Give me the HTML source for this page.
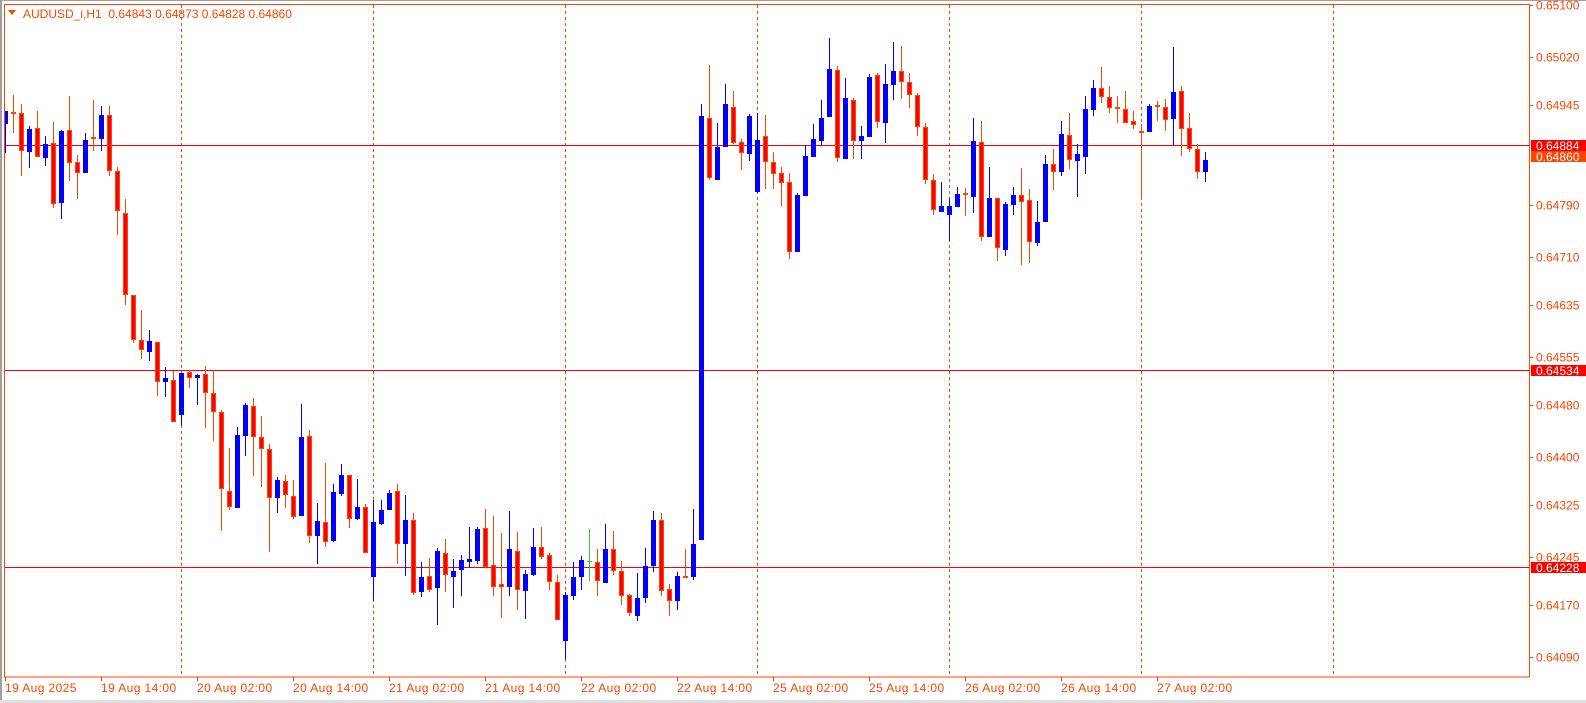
<!DOCTYPE html>
<html><head><meta charset="utf-8"><style>
html,body{margin:0;padding:0;background:#fff;width:1586px;height:703px;overflow:hidden}
svg{display:block}
text{font-family:"Liberation Sans",sans-serif;font-size:12px;fill:#ff4500}
</style></head><body>
<svg id="s" width="1586" height="703" xmlns="http://www.w3.org/2000/svg">
<rect x="0" y="0" width="1586" height="703" fill="#fff"/>
<rect x="0" y="0" width="1586" height="1" fill="#a0a0a0"/>
<rect x="0" y="0" width="2" height="703" fill="#a0a0a0"/>
<rect x="0" y="700" width="1586" height="3" fill="#e0e0e0"/>
<g id="grid"></g>
<rect x="4" y="145" width="1525" height="1" fill="#ff0000"/>
<rect x="4" y="370" width="1525" height="1" fill="#ff0000"/>
<rect x="4" y="567" width="1525" height="1" fill="#ff0000"/>
<g id="c"></g>
<rect x="4.5" y="4.5" width="1525" height="672.5" fill="none" stroke="#ff4500" stroke-width="1"/>
<g id="ax"></g>
<polygon points="8,10 16,10 12,15" fill="#ff4500"/>
<text x="23" y="18">AUDUSD_i,H1&#160;&#160;0.64843 0.64873 0.64828 0.64860</text>
<rect x="1531" y="140" width="55" height="11" fill="#ff0000"/>
<rect x="1531" y="151" width="55" height="11" fill="#ff4500"/>
<rect x="1531" y="365" width="55" height="11" fill="#ff0000"/>
<rect x="1531" y="562" width="55" height="11" fill="#ff0000"/>
<text x="1536" y="150" style="fill:#fff">0.64884</text>
<text x="1536" y="161" style="fill:#fff">0.64860</text>
<text x="1536" y="375" style="fill:#fff">0.64534</text>
<text x="1536" y="572" style="fill:#fff">0.64228</text>
</svg>
<script>
var d="B,111,124,111,153|R,112,114,95,133|R,113,151,104,176|B,129,152,126,168|R,128,157,111,157|B,144,158,136,166|R,143,204,122,208|B,131,203,130,219|R,130,163,96,181|R,162,173,155,199|B,140,173,133,173|R,137,139,100,151|B,115,139,106,151|R,115,171,106,176|R,171,211,167,235|R,213,295,199,305|R,295,340,295,343|R,340,350,310,359|B,341,352,330,361|R,342,382,342,396|B,378,382,367,397|R,380,422,371,422|B,373,415,373,426|R,372,378,370,388|B,375,378,374,405|R,374,393,366,428|R,393,412,370,441|R,412,489,410,531|R,491,507,448,510|B,435,508,427,508|B,405,436,403,456|R,406,437,398,476|R,437,449,416,487|R,449,498,444,552|B,480,498,477,513|R,481,495,475,508|R,496,517,480,519|B,437,516,404,516|R,436,536,430,543|B,521,536,503,564|R,522,542,463,547|B,492,541,484,542|B,475,494,464,496|R,475,519,475,528|B,507,519,479,520|R,507,553,504,553|B,522,577,500,601|B,510,524,500,525|B,493,510,490,510|R,491,544,484,564|B,520,544,495,576|R,520,593,513,595|B,577,592,562,597|R,576,590,558,592|B,551,588,548,625|R,553,575,539,592|B,571,577,559,608|B,560,570,555,596|B,559,562,527,568|B,529,561,527,564|R,528,567,509,568|R,565,587,516,596|R,584,587,533,618|B,549,587,511,596|R,551,590,532,610|B,574,591,570,619|B,547,575,528,576|R,547,557,527,559|R,555,582,553,590|R,582,620,575,620|B,595,641,592,659|B,577,596,562,600|B,560,577,556,590|G,561,562,529,581|R,562,581,549,596|B,549,583,524,583|R,549,571,531,575|R,571,596,561,605|R,595,613,594,616|B,598,616,573,621|B,566,598,548,603|B,520,566,511,572|R,520,591,513,596|R,589,601,584,616|B,576,601,572,610|R,576,578,549,578|B,544,577,509,580|B,116,540,104,540|R,118,178,65,180|B,147,180,123,180|B,104,147,84,147|R,107,143,91,144|R,142,153,139,170|B,116,154,114,161|B,140,192,113,193|R,136,162,115,189|R,162,174,152,189|R,173,183,167,206|R,182,252,173,259|B,195,252,193,252|B,156,196,145,196|B,139,157,124,157|B,118,141,100,145|B,69,117,38,117|R,70,158,66,162|B,98,159,78,159|R,100,141,98,159|B,136,141,126,159|B,77,137,74,137|R,75,122,73,128|B,84,123,64,143|B,71,85,42,100|R,71,82,46,99|R,82,95,73,108|R,95,127,93,136|R,127,180,123,184|R,180,210,174,215|B,206,212,182,212|B,206,215,198,241|B,194,207,187,207|R,193,195,188,216|B,141,197,118,213|R,142,237,121,241|B,198,237,167,237|R,198,248,198,261|B,204,250,202,256|B,195,205,187,215|R,195,202,168,265|R,200,242,189,263|B,222,243,201,246|B,164,222,155,222|R,164,172,149,190|B,134,172,121,176|R,135,160,113,169|B,154,161,144,197|B,109,157,96,174|B,88,110,80,116|R,88,97,67,103|R,97,108,86,113|R,107,109,96,123|R,109,123,91,123|R,121,125,111,129|R,131,132,124,199|B,106,132,104,132|R,105,107,101,121|R,107,120,99,131|B,92,119,47,145|R,91,129,86,156|R,128,149,113,152|R,149,172,144,179|B,160,172,152,182";
var out="";
d.split("|").forEach(function(s,i){
 var a=s.split(","),c=a[0],t=+a[1],b=+a[2],h=+a[3],l=+a[4];
 var wx=5+8*i,bx=3+8*i;
 if(i==0){bx=5;}
 var bw=(i==0)?3:5;
 if(c=="B"){
  out+='<rect x="'+wx+'" y="'+h+'" width="1" height="'+Math.max(1,l-h)+'" fill="#0000ff"/>';
  out+='<rect x="'+bx+'" y="'+t+'" width="'+bw+'" height="'+Math.max(2,b-t)+'" fill="#0000ff"/>';
 }else if(c=="R"){
  out+='<rect x="'+wx+'" y="'+h+'" width="1" height="'+Math.max(1,l-h)+'" fill="#ff4500"/>';
  var hh=Math.max(2,b-t);
  out+='<rect x="'+bx+'" y="'+t+'" width="'+bw+'" height="'+hh+'" fill="#ff4500"/>';
  if(hh>2)out+='<rect x="'+(bx+1)+'" y="'+(t+1)+'" width="'+(bw-2)+'" height="'+(hh-2)+'" fill="#ff0000"/>';
 }else{
  out+='<rect x="'+wx+'" y="'+h+'" width="1" height="'+(l-h)+'" fill="#33cc33"/>';
  out+='<rect x="'+bx+'" y="'+t+'" width="5" height="1" fill="#33cc33"/>';
 }
});
document.getElementById("c").innerHTML=out;
var g="";
[181,373,565,757,949,1141,1333].forEach(function(x){
 g+='<line x1="'+(x+0.5)+'" y1="5" x2="'+(x+0.5)+'" y2="677" stroke="#ff4500" stroke-width="1" stroke-dasharray="3,3"/>';
});
document.getElementById("grid").innerHTML=g;
var ax="";
var pl=[["0.65100",5.3],["0.65020",57],["0.64945",105],["0.64790",205],["0.64710",257],["0.64635",305],["0.64555",357],["0.64480",405],["0.64400",457],["0.64325",505],["0.64245",557],["0.64170",605],["0.64090",657]];
pl.forEach(function(p){
 var y=Math.round(p[1]);
 ax+='<rect x="1530" y="'+y+'" width="3" height="1" fill="#ff4500"/>';
 ax+='<text x="1536" y="'+(y+4.5)+'">'+p[0]+'</text>';
});
var tl=["19 Aug 2025","19 Aug 14:00","20 Aug 02:00","20 Aug 14:00","21 Aug 02:00","21 Aug 14:00","22 Aug 02:00","22 Aug 14:00","25 Aug 02:00","25 Aug 14:00","26 Aug 02:00","26 Aug 14:00","27 Aug 02:00"];
tl.forEach(function(t,k){
 var x=5+96*k;
 ax+='<rect x="'+x+'" y="677" width="1" height="4" fill="#ff4500"/>';
 ax+='<text x="'+(x)+'" y="692" style="letter-spacing:0.4px">'+t+'</text>';
});
document.getElementById("ax").innerHTML=ax;
</script>
</body></html>
